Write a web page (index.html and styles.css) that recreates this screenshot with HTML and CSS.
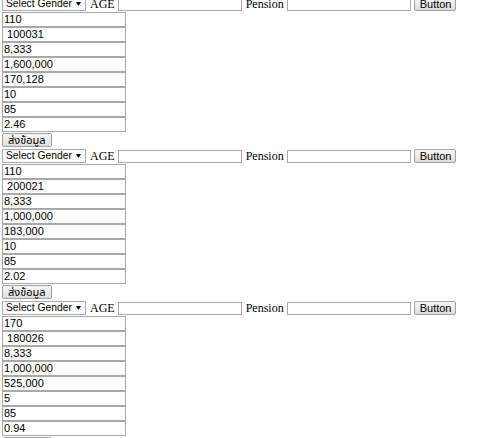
FILE: index.html
```html
<!DOCTYPE html>
<html lang="th">
<head>
  <meta charset="UTF-8">
  <title>Pension</title>
  <link rel="stylesheet" href="styles.css">
</head>
<body>
  <div class="page">
    <div class="block">
      <div class="form-row">
        <select class="gender"><option>Select Gender</option></select>
        <span class="label">AGE</span>
        <input type="text" class="field">
        <span class="label">Pension</span>
        <input type="text" class="field">
        <button class="btn">Button</button>
      </div>
      <div class="cell">110</div>
      <div class="cell">&nbsp;100031</div>
      <div class="cell">8,333</div>
      <div class="cell">1,600,000</div>
      <div class="cell">170,128</div>
      <div class="cell">10</div>
      <div class="cell">85</div>
      <div class="cell">2.46</div>
      <div class="send-row"><button class="btn">ส่งข้อมูล</button></div>
    </div>

    <div class="block">
      <div class="form-row">
        <select class="gender"><option>Select Gender</option></select>
        <span class="label">AGE</span>
        <input type="text" class="field">
        <span class="label">Pension</span>
        <input type="text" class="field">
        <button class="btn">Button</button>
      </div>
      <div class="cell">110</div>
      <div class="cell">&nbsp;200021</div>
      <div class="cell">8,333</div>
      <div class="cell">1,000,000</div>
      <div class="cell">183,000</div>
      <div class="cell">10</div>
      <div class="cell">85</div>
      <div class="cell">2.02</div>
      <div class="send-row"><button class="btn">ส่งข้อมูล</button></div>
    </div>

    <div class="block">
      <div class="form-row">
        <select class="gender"><option>Select Gender</option></select>
        <span class="label">AGE</span>
        <input type="text" class="field">
        <span class="label">Pension</span>
        <input type="text" class="field">
        <button class="btn">Button</button>
      </div>
      <div class="cell">170</div>
      <div class="cell">&nbsp;180026</div>
      <div class="cell">8,333</div>
      <div class="cell">1,000,000</div>
      <div class="cell">525,000</div>
      <div class="cell">5</div>
      <div class="cell">85</div>
      <div class="cell">0.94</div>
      <div class="send-row"><button class="btn">ส่งข้อมูล</button></div>
    </div>
  </div>
</body>
</html>
```

FILE: styles.css
```css
body {
  margin: 0 2px;
  font-family: 'Liberation Serif', serif;
  font-size: 12px;
  color: #000;
  background: #fff;
}

/* page is scrolled a few pixels */
.page {
  margin-top: -4px;
}

.form-row {
  display: flex;
  align-items: center;
  height: 16px;
}

.gender {
  -webkit-appearance: none;
  appearance: none;
  width: 84px;
  height: 14px;
  padding: 0 10px 0 3px;
  border: 1px solid #a9a9a9;
  border-radius: 0;
  background: #fff url("data:image/svg+xml,%3Csvg xmlns='http://www.w3.org/2000/svg' width='5' height='4'%3E%3Cpath d='M0 0h5L2.5 4z' fill='%23000'/%3E%3C/svg%3E") no-repeat right 4px center;
  font-family: 'Liberation Sans', Arial, sans-serif;
  font-size: 10.3px;
  line-height: 12px;
  color: #000;
}

.label {
  margin: 0 3px 0 4px;
  line-height: 14px;
}

.field {
  width: 124px;
  height: 13px;
  box-sizing: border-box;
  padding: 0;
  border: 1px solid #a9a9a9;
  font-size: 11px;
}

.btn {
  height: 14px;
  padding: 0 5px;
  border: 1px solid #a0a0a0;
  border-radius: 2px;
  background: linear-gradient(#f6f6f6, #dedede);
  font-family: 'Liberation Sans', 'Noto Sans Thai', sans-serif;
  font-size: 11px;
  line-height: 12px;
  color: #000;
}

.form-row .btn {
  margin-left: 3px;
  width: 42px;
}

.cell {
  width: 124px;
  height: 15px;
  box-sizing: border-box;
  border: 1px solid #a9a9a9;
  padding-left: 1px;
  font-family: 'Liberation Sans', Arial, sans-serif;
  font-size: 11px;
  line-height: 13px;
  white-space: pre;
}

.send-row {
  height: 16px;
  display: flex;
  align-items: center;
}
```
